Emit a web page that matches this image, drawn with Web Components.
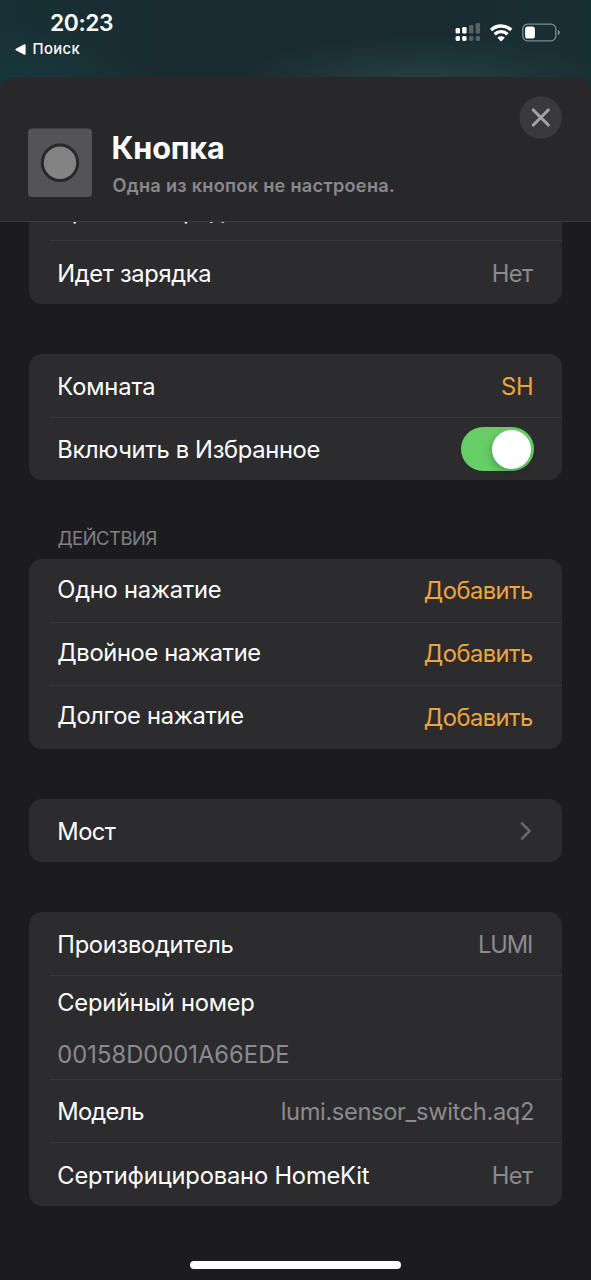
<!DOCTYPE html>
<html lang="ru">
<head>
<meta charset="utf-8">
<title>Кнопка</title>
<style>
html,body{margin:0;background:#1c1c1e}
body{width:591px;height:1280px;overflow:hidden;font-family:Inter,"Liberation Sans",sans-serif;color:#fff}
</style>
</head>
<body>
<home-screen>
  <status-bar slot="status"></status-bar>
  <accessory-header slot="header">
    <fit-text slot="title" ink="110.5">Кнопка</fit-text>
    <fit-text slot="subtitle" ink="281.5">Одна из кнопок не настроена.</fit-text>
  </accessory-header>

  <settings-group style="margin-top:-45px">
    <settings-row style="padding-top:5px"><fit-text ink="178">Уровень заряда</fit-text></settings-row>
    <settings-row last><fit-text ink="152">Идет зарядка</fit-text><fit-text slot="value" ink="40.3">Нет</fit-text></settings-row>
  </settings-group>

  <settings-group style="margin-top:50px">
    <settings-row><fit-text ink="96">Комната</fit-text><fit-text slot="value" tone="accent" ink="31">SH</fit-text></settings-row>
    <settings-row><fit-text ink="261.2">Включить в Избранное</fit-text><toggle-switch slot="value"></toggle-switch></settings-row>
  </settings-group>

  <settings-group heading style="margin-top:48px">
    <fit-text slot="heading" ink="99">ДЕЙСТВИЯ</fit-text>
    <settings-row raised><fit-text ink="162.5">Одно нажатие</fit-text><fit-text slot="value" tone="accent" ink="108.2">Добавить</fit-text></settings-row>
    <settings-row raised><fit-text ink="202">Двойное нажатие</fit-text><fit-text slot="value" tone="accent" ink="108.2">Добавить</fit-text></settings-row>
    <settings-row raised last><fit-text ink="185">Долгое нажатие</fit-text><fit-text slot="value" tone="accent" ink="108.2">Добавить</fit-text></settings-row>
  </settings-group>

  <settings-group style="margin-top:50px">
    <settings-row><fit-text ink="57.5">Мост</fit-text><chevron-icon slot="value"></chevron-icon></settings-row>
  </settings-group>

  <settings-group style="margin-top:50px">
    <settings-row><fit-text ink="175.3">Производитель</fit-text><fit-text slot="value" ink="54">LUMI</fit-text></settings-row>
    <settings-row stacked><fit-text ink="196">Серийный номер</fit-text><fit-text slot="value" ink="230">00158D0001A66EDE</fit-text></settings-row>
    <settings-row><fit-text ink="86">Модель</fit-text><fit-text slot="value" ink="251.3">lumi.sensor_switch.aq2</fit-text></settings-row>
    <settings-row last><fit-text ink="311.5">Сертифицировано HomeKit</fit-text><fit-text slot="value" ink="40.3">Нет</fit-text></settings-row>
  </settings-group>
</home-screen>

<script>
const define = (name, html, setup) => {
  const t = document.createElement('template');
  t.innerHTML = html;
  customElements.define(name, class extends HTMLElement {
    constructor() {
      super();
      this.attachShadow({mode: 'open'}).append(t.content.cloneNode(true));
    }
    connectedCallback() { if (setup) setup(this); }
  });
};

define('home-screen', `
<style>
:host{display:flex;flex-direction:column;width:591px;height:1280px;position:relative;
  background:radial-gradient(ellipse 190px 44px at 420px 80px,#24403f 0,#24403f00 100%),
  radial-gradient(ellipse 110px 60px at 30px 85px,#17383a 0,#17383a00 100%),
  linear-gradient(90deg,#183136 0,#1a2b2f 32%,#1a2a2e 62%,#182f34 100%)}
.sheet{flex:1;min-height:0;display:flex;flex-direction:column;background:#1c1c1e;border-radius:15px 15px 0 0;overflow:hidden}
.list{flex:1;min-height:0;overflow:hidden;padding:0 29px;display:flex;flex-direction:column}
.home{position:absolute;left:190px;bottom:11px;width:211px;height:8px;border-radius:4px;background:#fff}
</style>
<slot name="status"></slot>
<div class="sheet"><slot name="header"></slot><div class="list"><slot></slot></div></div>
<div class="home"></div>`);

define('status-bar', `
<style>
:host{display:flex;justify-content:space-between;height:77px;flex:none;box-sizing:border-box;padding:9px 30px 0 15px}
.left{display:flex;flex-direction:column;padding-top:1px}
.time{font-size:22.8px;font-weight:600;line-height:26px;padding-left:36px}
.back{display:flex;align-items:center;gap:6.5px;font-size:14.8px;font-weight:500;line-height:18px;margin-top:4px}
.icons{margin-top:13px;width:106px;height:20px;flex:none}
</style>
<div class="left">
 <div class="time"><fit-text ink="62">20:23</fit-text></div>
 <div class="back"><svg width="11" height="11" viewBox="0 0 11 11"><path d="M.8 4.7 9.4.2Q10.6 0 10.6 1V10Q10.6 11 9.4 10.8L.8 6.3Q0 5.5.8 4.7z" fill="#fff"/></svg><fit-text ink="48">Поиск</fit-text></div>
</div>
<svg class="icons" viewBox="455 22 106 20" fill="#fff">
 <rect x="455.6" y="28" width="4.4" height="5.6" rx="1.3"/><rect x="462.2" y="27" width="4.4" height="6.6" rx="1.3"/>
 <rect x="455.6" y="36" width="4.4" height="5" rx="1.4"/><rect x="462.2" y="36" width="4.4" height="5" rx="1.4"/>
 <g fill-opacity=".26"><rect x="469" y="25" width="4.4" height="8.6" rx="1.3"/><rect x="475.7" y="23" width="4.4" height="10.6" rx="1.3"/>
 <rect x="469" y="36" width="4.4" height="5" rx="1.4"/><rect x="475.7" y="36" width="4.4" height="5" rx="1.4"/></g>
 <g fill="none" stroke="#fff" stroke-width="3.3"><path d="M491 30a14.8 14.8 0 0 1 20.2 0"/><path d="M494.7 34.2a9.4 9.4 0 0 1 12.8 0"/></g>
 <path d="M497.4 37.7a5.4 5.4 0 0 1 7.4 0L501.7 40.9q-.6.5-1.2 0z"/>
 <rect x="522.8" y="24.2" width="33" height="16.6" rx="4.8" fill="none" stroke="#fff" stroke-opacity=".45" stroke-width="1.3"/>
 <rect x="525.1" y="26.5" width="9.8" height="12" rx="2.6"/>
 <path d="M557.8 29.8q2.2.9 2.2 2.7t-2.2 2.7z" fill-opacity=".45"/>
</svg>`);

define('accessory-header', `
<style>
:host{display:flex;height:145px;flex:none;box-sizing:border-box;background:#28282a;border-bottom:1px solid #39393b;padding:19px 29px 0 28px}
.tile{width:64px;height:69px;margin-top:32.4px;flex:none}
.text{flex:1;display:flex;flex-direction:column;padding:36px 0 0 20.5px}
.title{font-size:30.6px;font-weight:700;line-height:32px}
.sub{font-size:18.2px;font-weight:600;line-height:22px;color:#88888d;margin-top:10px}
.close{width:43px;height:43px;flex:none}
</style>
<svg class="tile" viewBox="0 0 64 69"><rect y=".5" width="64" height="68.5" rx="4" fill="#545456"/><circle cx="32" cy="34.8" r="17.7" fill="#838383" stroke="#28282a" stroke-width="3"/></svg>
<div class="text"><div class="title"><slot name="title"></slot></div><div class="sub"><slot name="subtitle"></slot></div></div>
<svg class="close" viewBox="0 0 43 43"><circle cx="21.8" cy="21.5" r="21.2" fill="#3a393e"/><path d="M14.3 14 29.3 29M29.3 14 14.3 29" stroke="#a3a2a9" stroke-width="3.1" stroke-linecap="round"/></svg>`);

define('settings-group', `
<style>
:host{display:block;flex:none}
.head{display:none;font-size:18.4px;line-height:20px;color:#818186;padding:0 0 11px 28.5px}
:host([heading]) .head{display:block}
.card{background:#2c2c2e;border-radius:13px;overflow:hidden}
</style>
<div class="head"><slot name="heading"></slot></div>
<div class="card"><slot></slot></div>`);

define('settings-row', `
<style>
:host{display:flex;align-items:center;justify-content:space-between;height:63px;box-sizing:border-box;padding:3px 29px 0 29.3px;font-size:23.7px;line-height:30px;
 background:linear-gradient(#37373a,#37373a) 21px 0/100% 1px no-repeat}
:host([last]){height:64px}
:host(:first-of-type){background:none}
:host([raised]) .label{margin-top:-5px}
:host([raised]) .value{margin-top:-1.2px}
:host([stacked]){flex-direction:column;align-items:flex-start;justify-content:flex-start;height:104px;padding-top:13px;gap:22px}
.value{color:#8a8a8f;display:flex}
::slotted([tone=accent]){color:#f1a33c}
</style>
<div class="label"><slot></slot></div><div class="value"><slot name="value"></slot></div>`);

define('toggle-switch', `
<style>
:host{display:flex;justify-content:flex-end;align-items:center;width:73px;height:44px;border-radius:22px;background:#67ce67;box-sizing:border-box;padding-right:2.5px;margin-right:-.5px;margin-top:-2px}
i{width:39px;height:39px;border-radius:50%;background:#fff;box-shadow:-2px 3px 7px #0003}
</style><i></i>`);

define('chevron-icon', `
<style>:host{display:flex;margin:-3px 1px 0 0}</style>
<svg width="13" height="20" viewBox="0 0 13 20"><path d="M3 2.3 10.6 10 3 17.7" fill="none" stroke="#68686c" stroke-width="2.5" stroke-linecap="round" stroke-linejoin="round"/></svg>`);

const ctx = document.createElement('canvas').getContext('2d');
define('fit-text', `<style>:host{display:block;width:max-content;white-space:nowrap}</style><slot></slot>`, el => {
  const cs = getComputedStyle(el);
  const text = el.textContent;
  ctx.font = cs.fontWeight + ' ' + cs.fontSize + ' ' + cs.fontFamily;
  const m = ctx.measureText(text);
  const left = -m.actualBoundingBoxLeft - (/^[ИКВМПНL]/.test(text) ? 1 : 0);
  const right = m.actualBoundingBoxRight + (/[HI]$/.test(text) ? 1 : 0);
  const ls = (parseFloat(el.getAttribute('ink')) - (right - left)) / (text.length - 1);
  el.style.letterSpacing = ls + 'px';
  el.style.marginLeft = -left + 'px';
  el.style.marginRight = -(ls + m.width - right) + 'px';
});
</script>
</body>
</html>
